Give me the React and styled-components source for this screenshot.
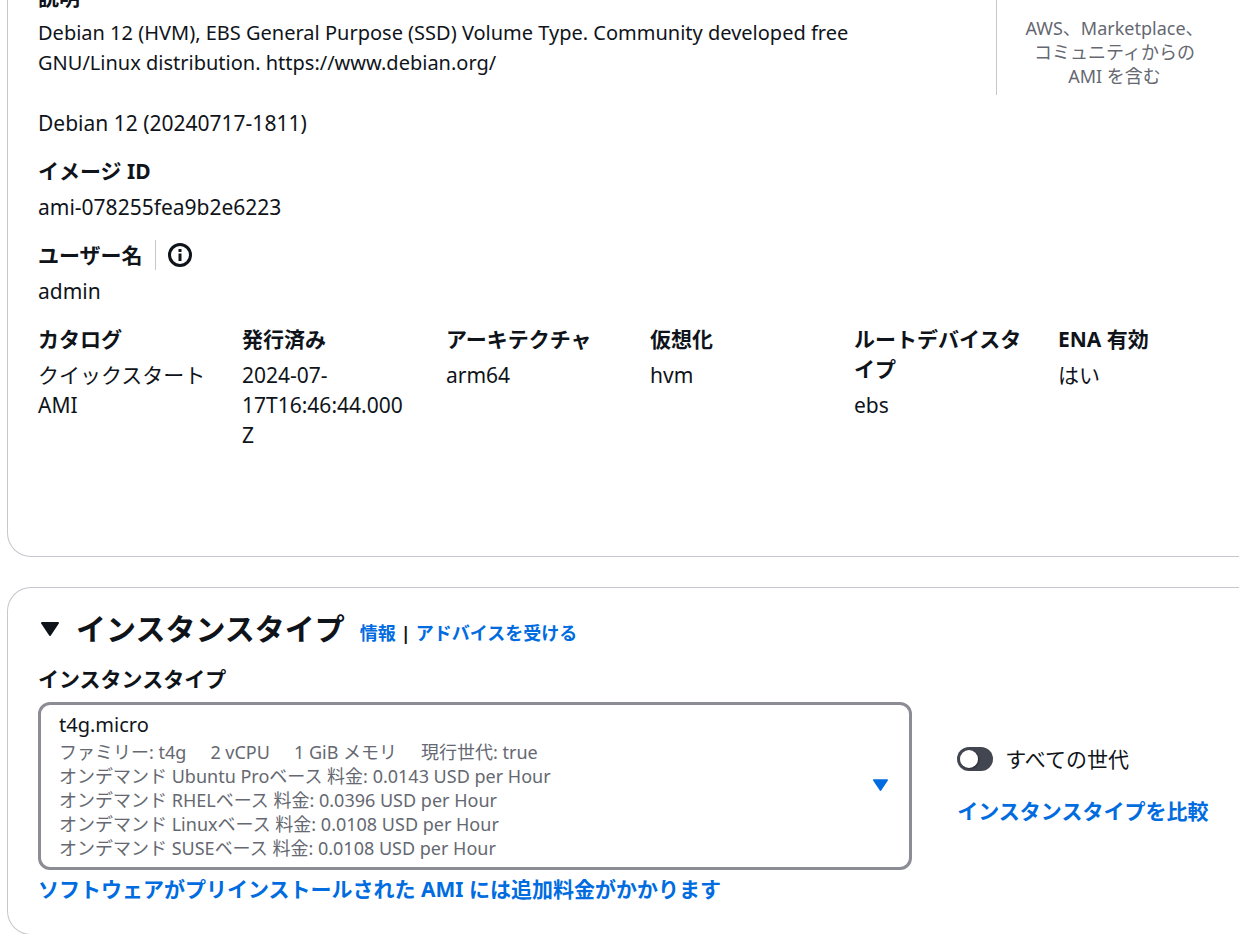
import React, { useState } from "react";
import styled, { createGlobalStyle } from "styled-components";

const color = {
  text: "#0f141a",
  muted: "#656871",
  link: "#006ce0",
  line: "#c6c6cd",
  control: "#8c8c94",
  toggle: "#424650",
};

const GlobalStyle = createGlobalStyle`
  *, *::before, *::after { box-sizing: border-box; }
  body {
    margin: 0;
    background: #fff;
    color: ${color.text};
    font-family: "Noto Sans", "Noto Sans CJK JP", sans-serif;
    font-size: 20px;
    line-height: 30px;
  }
`;

const Page = styled.main`
  display: flex;
  flex-direction: column;
  gap: 30px;
  height: 100vh;
  overflow: hidden;
  padding-left: 7px;
`;

const Card = styled.section`
  flex: none;
  border: 1px solid ${color.line};
  border-right: 0;
  border-radius: 24px 0 0 24px;
  padding: 22px 7px 30px 30px;
`;

const ImageCard = styled(Card)`
  border-top: 0;
  border-top-left-radius: 0;
  margin-top: -18px;
  padding-top: 0;
  padding-bottom: 106px;
`;

const Summary = styled.div`
  display: flex;
  align-items: flex-start;
  justify-content: space-between;
`;

const Fields = styled.dl`
  display: flex;
  flex-direction: column;
  gap: 18px;
  margin: 0;
  max-width: 880px;
`;

const Columns = styled.dl`
  display: grid;
  grid-template-columns: repeat(6, minmax(0, 1fr));
  gap: 30px;
  margin: 18px 0 0;
`;

const Field = styled.div`
  display: flex;
  flex-direction: column;
  gap: 6px;
`;

const Term = styled.dt`
  display: flex;
  align-items: center;
  font-size: 21px;
  font-weight: 700;
  word-break: break-all;
`;

const Value = styled.dd`
  margin: 0;
  font-size: ${(p) => (p.$prose ? "20px" : "21px")};
  white-space: pre-line;
  overflow-wrap: anywhere;
`;

const Build = styled.span`
  display: block;
  margin-top: 30px;
  font-size: 21px;
`;

const InfoButton = styled.button`
  display: flex;
  align-items: center;
  height: 30px;
  margin-left: 12px;
  padding: 0 0 0 12px;
  border: 0;
  border-left: 1px solid ${color.line};
  background: none;
  color: inherit;
  cursor: pointer;
`;

const CatalogNote = styled.aside`
  flex: none;
  width: 236px;
  padding: 34px 0 7px;
  border-left: 1px solid ${color.line};
  color: ${color.muted};
  font-size: 18px;
  line-height: 24px;
  text-align: center;
`;

const Header = styled.header`
  display: flex;
  align-items: center;
  gap: 15px;
`;

const Collapse = styled.button`
  display: flex;
  align-items: center;
  gap: 17px;
  padding: 0 0 0 3px;
  border: 0;
  background: none;
  color: inherit;
  font: inherit;
  cursor: pointer;
`;

const Title = styled.h2`
  margin: 0;
  font-size: 30px;
  line-height: 36px;
`;

const HeaderLinks = styled.div`
  display: flex;
  gap: 5px;
  padding-top: 8px;
  font-size: 18px;
  line-height: 30px;
  font-weight: 700;
`;

const Link = styled.a`
  color: ${color.link};
  font-weight: 700;
  text-decoration: none;
  font-size: ${(p) => (p.$small ? "18px" : "21px")};
`;

const TypeRow = styled.div`
  display: grid;
  grid-template-columns: minmax(0, 35fr) minmax(0, 11fr);
  column-gap: 45px;
  margin-top: 16px;
`;

const Picker = styled.div`
  display: flex;
  flex-direction: column;
`;

const PickerLabel = styled.label`
  margin-bottom: 8px;
  font-size: 21px;
  font-weight: 700;
`;

const Trigger = styled.button`
  display: flex;
  align-items: center;
  justify-content: space-between;
  margin-bottom: 4px;
  padding: 5px 21px 7px 18px;
  border: 3px solid ${color.control};
  border-radius: 12px;
  background: #fff;
  color: inherit;
  font: inherit;
  text-align: left;
  cursor: pointer;
`;

const Option = styled.span`
  display: flex;
  flex-direction: column;
`;

const Detail = styled.span`
  display: flex;
  gap: 24px;
  color: ${color.muted};
  font-size: 18px;
  line-height: 24px;
`;

const Side = styled.div`
  display: flex;
  flex-direction: column;
  align-items: flex-start;
  gap: 22px;
  padding-top: 80px;
`;

const ToggleLabel = styled.label`
  display: flex;
  align-items: center;
  gap: 12px;
  font-size: 21px;
  cursor: pointer;
`;

const Toggle = styled.input`
  appearance: none;
  display: flex;
  align-items: center;
  width: 36px;
  height: 24px;
  margin: 0;
  padding: 0 3px;
  border-radius: 12px;
  background: ${color.toggle};
  cursor: pointer;

  &::before {
    content: "";
    width: 18px;
    height: 18px;
    border-radius: 50%;
    background: #fff;
    box-shadow: 1px 1px 2px rgba(0, 0, 0, 0.4);
  }
  &:checked {
    justify-content: flex-end;
    background: ${color.link};
  }
`;

const InfoIcon = () => (
  <svg width="24" height="24" viewBox="0 0 24 24" fill="none" aria-hidden="true">
    <circle cx="12" cy="12" r="10.5" stroke="currentColor" strokeWidth="3" />
    <path d="M12 10.5V18M12 6v3" stroke="currentColor" strokeWidth="3" />
  </svg>
);

const Caret = ({ width, height, fill }) => (
  <svg width={width} height={height} viewBox="0 0 18 14" aria-hidden="true">
    <path
      d="M1 1H17L9 13Z"
      fill={fill}
      stroke={fill}
      strokeWidth="2"
      strokeLinejoin="round"
    />
  </svg>
);

const details = [
  { term: "カタログ", value: "クイックスタート\nAMI" },
  { term: "発行済み", value: "2024-07-\n17T16:46:44.000\nZ" },
  { term: "アーキテクチャ", value: "arm64" },
  { term: "仮想化", value: "hvm" },
  { term: "ルートデバイスタイプ", value: "ebs" },
  { term: "ENA 有効", value: "はい" },
];

const prices = [
  ["Ubuntu Pro", "0.0143"],
  ["RHEL", "0.0396"],
  ["Linux", "0.0108"],
  ["SUSE", "0.0108"],
];

export default function App() {
  const [allGenerations, setAllGenerations] = useState(false);

  return (
    <>
      <GlobalStyle />
      <Page lang="ja">
        <ImageCard>
          <Summary>
            <Fields>
              <Field>
                <Term>説明</Term>
                <Value $prose>
                  Debian 12 (HVM), EBS General Purpose (SSD) Volume Type. Community developed free
                  GNU/Linux distribution. https://www.debian.org/
                  <Build>Debian 12 (20240717-1811)</Build>
                </Value>
              </Field>
              <Field>
                <Term>イメージ ID</Term>
                <Value>ami-078255fea9b2e6223</Value>
              </Field>
              <Field>
                <Term>
                  ユーザー名
                  <InfoButton type="button" aria-label="ユーザー名の情報">
                    <InfoIcon />
                  </InfoButton>
                </Term>
                <Value>admin</Value>
              </Field>
            </Fields>
            <CatalogNote>
              AWS、Marketplace、
              <br />
              コミュニティからの
              <br />
              AMI を含む
            </CatalogNote>
          </Summary>
          <Columns>
            {details.map((d) => (
              <Field key={d.term}>
                <Term>{d.term}</Term>
                <Value>{d.value}</Value>
              </Field>
            ))}
          </Columns>
        </ImageCard>

        <Card>
          <Header>
            <Collapse type="button" aria-expanded="true">
              <Caret width={18} height={14} fill={color.text} />
              <Title>インスタンスタイプ</Title>
            </Collapse>
            <HeaderLinks>
              <Link href="#info" $small>情報</Link>
              <span>|</span>
              <Link href="#advice" $small>アドバイスを受ける</Link>
            </HeaderLinks>
          </Header>
          <TypeRow>
            <Picker>
              <PickerLabel htmlFor="instance-type">インスタンスタイプ</PickerLabel>
              <Trigger id="instance-type" type="button" aria-haspopup="listbox">
                <Option>
                  <span>t4g.micro</span>
                  <Detail>
                    <span>ファミリー: t4g</span>
                    <span>2 vCPU</span>
                    <span>1 GiB メモリ</span>
                    <span>現行世代: true</span>
                  </Detail>
                  {prices.map(([base, price]) => (
                    <Detail key={base}>
                      オンデマンド {base}ベース 料金: {price} USD per Hour
                    </Detail>
                  ))}
                </Option>
                <Caret width={15} height={12} fill={color.link} />
              </Trigger>
              <Link href="#pricing">
                ソフトウェアがプリインストールされた AMI には追加料金がかかります
              </Link>
            </Picker>
            <Side>
              <ToggleLabel>
                <Toggle
                  type="checkbox"
                  role="switch"
                  checked={allGenerations}
                  onChange={(e) => setAllGenerations(e.target.checked)}
                />
                すべての世代
              </ToggleLabel>
              <Link href="#compare">インスタンスタイプを比較</Link>
            </Side>
          </TypeRow>
        </Card>
      </Page>
    </>
  );
}
